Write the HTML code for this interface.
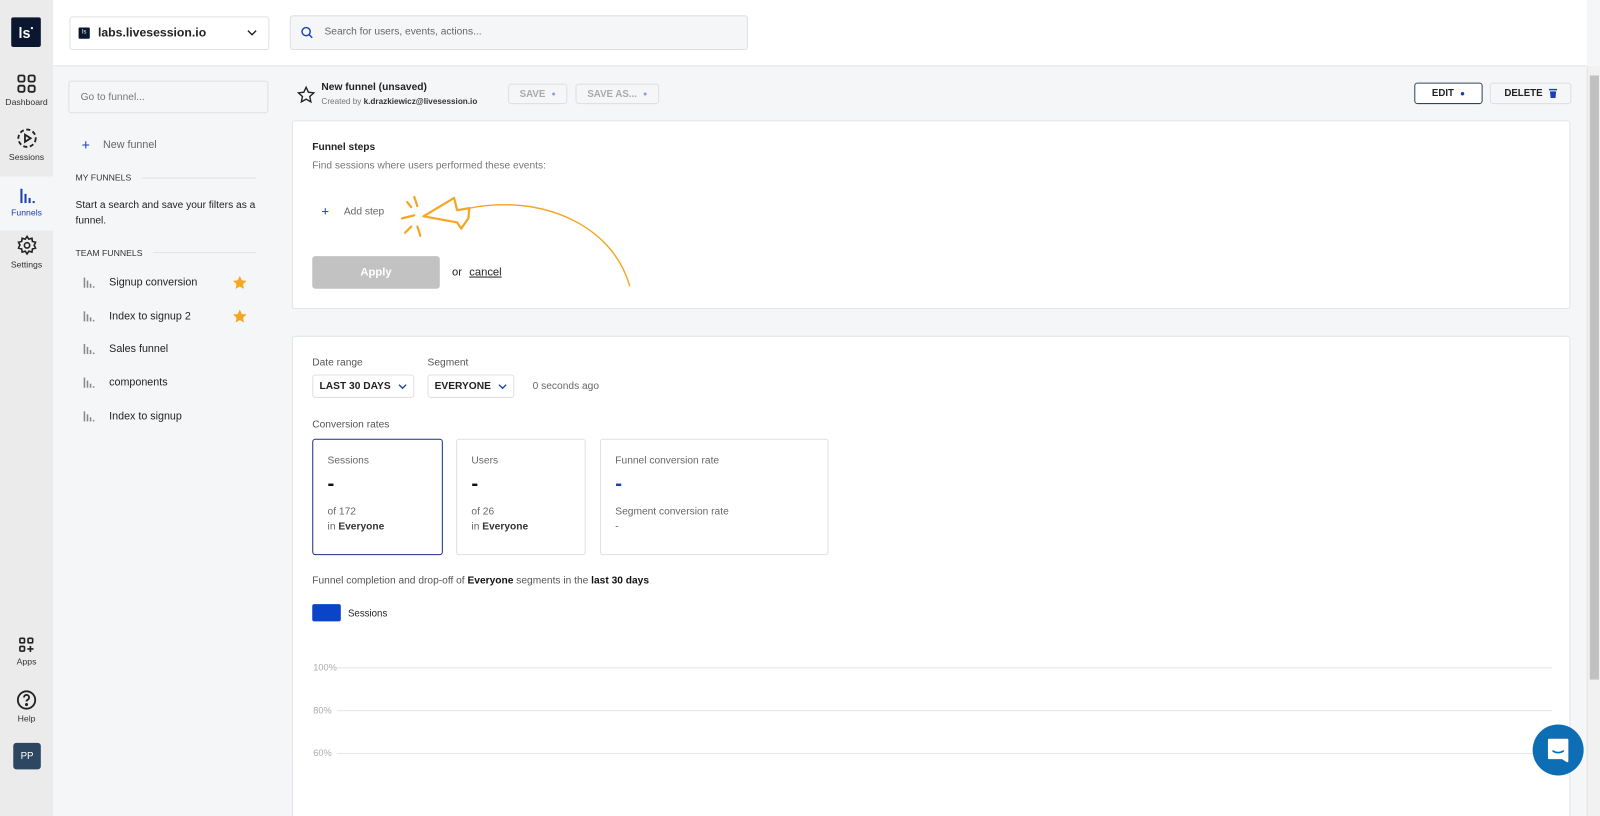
<!DOCTYPE html>
<html><head><meta charset="utf-8"><style>
*{box-sizing:border-box;margin:0;padding:0}
html,body{width:1600px;height:791px;overflow:hidden}
body{font-family:"Liberation Sans",Arial,sans-serif;background:#f5f6f8;color:#222}
#w{position:absolute;left:0;top:0;width:1568px;height:800px;transform:scale(1.0204);transform-origin:0 0;overflow:hidden}
.abs{position:absolute}
.nav{left:0;top:0;width:52px;height:800px;background:#ebebeb}
.ni{position:absolute;left:0;width:52px;text-align:center;font-size:8.5px;color:#333}
.ni svg{display:block;margin:0 auto 3px}
.header{left:52px;top:0;width:1503px;height:65px;background:#fff;border-bottom:1px solid #e3e3e3}
.btn{position:absolute;border:1px solid #dde0e4;border-radius:3px;font-size:9.5px;font-weight:bold;display:flex;align-items:center;justify-content:center;gap:6px;background:#f5f6f8}
.card{position:absolute;background:#fff;border:1px solid #e2e4e8;border-radius:3px}
.t{position:absolute;white-space:nowrap}
.fi{position:absolute;left:80px;font-size:10.5px;color:#222;white-space:nowrap;width:160px;height:14px}
.fi svg{position:absolute;left:0;top:1px}
.fi span{position:absolute;left:27px;top:0;white-space:nowrap}
.sel{position:absolute;border:1px solid #dde0e4;border-radius:3px;font-size:10px;font-weight:bold;display:flex;align-items:center;justify-content:center;gap:7px}
.stat{position:absolute;top:430px;height:114px;border:1px solid #dde0e4;border-radius:3px;font-size:10px;color:#666;padding:15px 14px}
.line{position:absolute;left:330px;width:1191px;height:1px;background:#e5e5e5}
.yl{position:absolute;left:307px;font-size:9px;color:#aaa}
</style></head><body><div id="w">
<div class="abs nav"></div>
<div class="abs" style="left:11px;top:17px;width:29px;height:29px;background:#0b1730;color:#fff;font-size:14px;font-weight:bold;display:flex;align-items:center;justify-content:center;border-radius:2px">ls<span style="font-size:5px;vertical-align:top;margin-top:-8px">●</span></div>
<div class="ni" style="top:72px"><svg width="20" height="20" viewBox="0 0 20 20" fill="none" stroke="#222" stroke-width="1.8"><rect x="2" y="2" width="6" height="6" rx="1.5"/><rect x="12" y="2" width="6" height="6" rx="1.5"/><rect x="2" y="12" width="6" height="6" rx="1.5"/><rect x="12" y="12" width="6" height="6" rx="1.5"/></svg>Dashboard</div>
<div class="ni" style="top:125px"><svg width="21" height="21" viewBox="0 0 21 21" fill="none" stroke="#222" stroke-width="1.8"><circle cx="10.5" cy="10.5" r="8.5" stroke-dasharray="4 2.5"/><path d="M8.5 7v7l5.5-3.5z"/></svg>Sessions</div>
<div class="abs" style="left:0;top:173px;width:52px;height:53px;background:#f5f6f8"></div>
<div class="ni" style="top:184px;color:#1840b0"><svg width="20" height="16" viewBox="0 0 20 16" fill="#1840b0"><rect x="4" y="1" width="2" height="14"/><rect x="8" y="6" width="2" height="9"/><rect x="12" y="10" width="2" height="5"/><rect x="16" y="13" width="2" height="2"/></svg>Funnels</div>
<div class="ni" style="top:230px"><svg width="21" height="21" viewBox="0 0 24 24" fill="none" stroke="#222" stroke-width="1.8"><circle cx="12" cy="12" r="3"/><path d="M12 2l2 3 3.5-1 .5 3.5 3.5 1-1.5 3.5 1.5 3-3.5 1-.5 3.5-3.5-1-2 3-2-3-3.5 1-.5-3.5-3.5-1 1.5-3.5L2.5 8.5 6 7.5 6.5 4 10 5z"/></svg>Settings</div>
<div class="ni" style="top:624px"><svg width="16" height="16" viewBox="0 0 16 16" fill="none" stroke="#222" stroke-width="1.6"><rect x="1.5" y="1.5" width="4.5" height="4.5" rx="1"/><rect x="9.5" y="1.5" width="4.5" height="4.5" rx="1"/><rect x="1.5" y="9.5" width="4.5" height="4.5" rx="1"/><path d="M11.8 9v6M8.8 12h6"/></svg>Apps</div>
<div class="ni" style="top:676px"><svg width="20" height="20" viewBox="0 0 20 20" fill="none" stroke="#222" stroke-width="1.8"><circle cx="10" cy="10" r="8.5"/><path d="M7.5 7.5a2.5 2.5 0 1 1 3.5 2.3c-.7.4-1 .9-1 1.7"/><circle cx="10" cy="14.5" r=".6" fill="#222"/></svg>Help</div>
<div class="abs" style="left:13px;top:728px;width:27px;height:26px;background:#2d4763;border-radius:3px;color:#fff;font-size:9.5px;display:flex;align-items:center;justify-content:center">PP</div>

<div class="abs header"></div>
<div class="abs" style="left:68px;top:16px;width:196px;height:33px;border:1px solid #dde0e4;border-radius:3px;background:#fff"></div>
<div class="abs" style="left:77px;top:27px;width:11px;height:11px;background:#0b1730;border-radius:1px;color:#fff;font-size:6px;text-align:center;line-height:11px">ls</div>
<div class="t" style="left:96px;top:25px;font-size:12px;font-weight:bold">labs.livesession.io</div>
<svg class="abs" style="left:242px;top:29px" width="10" height="6" viewBox="0 0 10 6" fill="none" stroke="#222" stroke-width="1.4"><path d="M1 1l4 4 4-4"/></svg>
<div class="abs" style="left:284px;top:15px;width:449px;height:34px;border:1px solid #dde0e4;border-radius:3px;background:#f5f6f8"></div>
<svg class="abs" style="left:295px;top:26px" width="12" height="12" viewBox="0 0 12 12" fill="none" stroke="#1840b0" stroke-width="1.4"><circle cx="5" cy="5" r="4"/><path d="M8 8l3 3"/></svg>
<div class="t" style="left:318px;top:26px;font-size:10px;color:#666">Search for users, events, actions...</div>

<div class="abs" style="left:67px;top:79px;width:196px;height:32px;border:1px solid #dde0e4;border-radius:3px;background:#f5f6f8"></div>
<div class="t" style="left:79px;top:90px;font-size:10px;color:#777">Go to funnel...</div>
<div class="t" style="left:80px;top:134px;font-size:14px;color:#1840b0">+</div>
<div class="t" style="left:101px;top:136px;font-size:10.5px;color:#666">New funnel</div>
<div class="t" style="left:74px;top:169px;font-size:8.5px;color:#333">MY FUNNELS</div>
<div class="abs" style="left:139px;top:174px;width:112px;height:1px;background:#e3e3e3"></div>
<div class="t" style="left:74px;top:194px;font-size:10px;line-height:15px;color:#222;white-space:normal;width:180px">Start a search and save your filters as a funnel.</div>
<div class="t" style="left:74px;top:243px;font-size:8.5px;color:#333">TEAM FUNNELS</div>
<div class="abs" style="left:150px;top:247px;width:101px;height:1px;background:#e3e3e3"></div>
<div class="fi" style="top:271px"><svg width="14" height="11" viewBox="0 0 14 11" fill="#888"><rect x="2" y="0" width="1.5" height="10"/><rect x="5" y="3" width="1.5" height="7"/><rect x="8" y="6" width="1.5" height="4"/><rect x="11" y="8.5" width="1.5" height="1.5"/></svg><span>Signup conversion</span></div>
<div class="fi" style="top:304px"><svg width="14" height="11" viewBox="0 0 14 11" fill="#888"><rect x="2" y="0" width="1.5" height="10"/><rect x="5" y="3" width="1.5" height="7"/><rect x="8" y="6" width="1.5" height="4"/><rect x="11" y="8.5" width="1.5" height="1.5"/></svg><span>Index to signup 2</span></div>
<div class="fi" style="top:336px"><svg width="14" height="11" viewBox="0 0 14 11" fill="#888"><rect x="2" y="0" width="1.5" height="10"/><rect x="5" y="3" width="1.5" height="7"/><rect x="8" y="6" width="1.5" height="4"/><rect x="11" y="8.5" width="1.5" height="1.5"/></svg><span>Sales funnel</span></div>
<div class="fi" style="top:369px"><svg width="14" height="11" viewBox="0 0 14 11" fill="#888"><rect x="2" y="0" width="1.5" height="10"/><rect x="5" y="3" width="1.5" height="7"/><rect x="8" y="6" width="1.5" height="4"/><rect x="11" y="8.5" width="1.5" height="1.5"/></svg><span>components</span></div>
<div class="fi" style="top:402px"><svg width="14" height="11" viewBox="0 0 14 11" fill="#888"><rect x="2" y="0" width="1.5" height="10"/><rect x="5" y="3" width="1.5" height="7"/><rect x="8" y="6" width="1.5" height="4"/><rect x="11" y="8.5" width="1.5" height="1.5"/></svg><span>Index to signup</span></div>
<svg class="abs" style="left:227px;top:269px" width="16" height="16" viewBox="0 0 24 24" fill="#f5a623"><path d="M12 2l3 6.5 7 .8-5.2 4.8 1.4 7L12 17.6 5.8 21.1l1.4-7L2 9.3l7-.8z"/></svg>
<svg class="abs" style="left:227px;top:302px" width="16" height="16" viewBox="0 0 24 24" fill="#f5a623"><path d="M12 2l3 6.5 7 .8-5.2 4.8 1.4 7L12 17.6 5.8 21.1l1.4-7L2 9.3l7-.8z"/></svg>

<svg class="abs" style="left:291px;top:84px" width="18" height="18" viewBox="0 0 24 24" fill="none" stroke="#222" stroke-width="1.8"><path d="M12 2l3 6.5 7 .8-5.2 4.8 1.4 7L12 17.6 5.8 21.1l1.4-7L2 9.3l7-.8z"/></svg>
<div class="t" style="left:315px;top:80px;font-size:10px;font-weight:bold">New funnel (unsaved)</div>
<div class="t" style="left:315px;top:95px;font-size:8px;color:#777">Created by <b style="color:#333">k.drazkiewicz@livesession.io</b></div>
<div class="btn" style="left:498px;top:82px;width:58px;height:20px;color:#aaa">SAVE <span style="color:#8aa3dd;font-size:7px">●</span></div>
<div class="btn" style="left:564px;top:82px;width:82px;height:20px;color:#aaa">SAVE AS... <span style="color:#8aa3dd;font-size:7px">●</span></div>
<div class="btn" style="left:1386px;top:81px;width:67px;height:21px;border-color:#2d4763;color:#222;background:#fff">EDIT <span style="color:#1840b0;font-size:8px">●</span></div>
<div class="btn" style="left:1460px;top:81px;width:80px;height:21px;color:#222">DELETE <svg width="8" height="9" viewBox="0 0 8 9" fill="#1840b0"><rect x="0" y="0" width="8" height="1.5"/><path d="M1 2.5h6l-.6 6.5H1.6z"/></svg></div>

<div class="card" style="left:286px;top:118px;width:1253px;height:185px"></div>
<div class="t" style="left:306px;top:139px;font-size:10px;font-weight:bold">Funnel steps</div>
<div class="t" style="left:306px;top:157px;font-size:10px;color:#777">Find sessions where users performed these events:</div>
<div class="t" style="left:315px;top:199px;font-size:13px;color:#1840b0">+</div>
<div class="t" style="left:337px;top:202px;font-size:10px;color:#666">Add step</div>
<svg class="abs" style="left:380px;top:185px" width="260" height="105" viewBox="380 185 260 105" fill="none" stroke="#f5a623" stroke-width="2.2" stroke-linecap="round" stroke-linejoin="round">
<path d="M406 193l3 9M394 214l12-3M397 228l6-6M409 222l3 9M399 198l4 5"/>
<path d="M415 212L445 194l3 12 12-2-1 10-7 10-4-6z"/>
<path d="M460 204C530 190 600 220 617 280" stroke-width="1.4"/></svg>
<div class="abs" style="left:306px;top:251px;width:125px;height:32px;background:#c2c2c2;border-radius:3px;color:#fff;font-size:11px;font-weight:bold;text-align:center;line-height:32px">Apply</div>
<div class="t" style="left:443px;top:261px;font-size:11px">or <span style="margin-left:4px;text-decoration:underline">cancel</span></div>

<div class="card" style="left:286px;top:329px;width:1253px;height:480px"></div>
<div class="t" style="left:306px;top:350px;font-size:10px;color:#555">Date range</div>
<div class="t" style="left:419px;top:350px;font-size:10px;color:#555">Segment</div>
<div class="sel" style="left:306px;top:367px;width:100px;height:23px">LAST 30 DAYS <svg width="9" height="6" viewBox="0 0 9 6" fill="none" stroke="#1840b0" stroke-width="1.3"><path d="M1 1l3.5 3.5L8 1"/></svg></div>
<div class="sel" style="left:419px;top:367px;width:85px;height:23px">EVERYONE <svg width="9" height="6" viewBox="0 0 9 6" fill="none" stroke="#1840b0" stroke-width="1.3"><path d="M1 1l3.5 3.5L8 1"/></svg></div>
<div class="t" style="left:522px;top:373px;font-size:10px;color:#666">0 seconds ago</div>
<div class="t" style="left:306px;top:411px;font-size:10px;color:#555">Conversion rates</div>
<div class="stat" style="left:306px;width:128px;border:1.5px solid #1a2f8a">Sessions<div style="font-size:20px;color:#111;font-weight:bold;margin-top:6px">-</div><div style="margin-top:8px;line-height:15px">of 172<br>in <b style="color:#333">Everyone</b></div></div>
<div class="stat" style="left:447px;width:127px">Users<div style="font-size:20px;color:#111;font-weight:bold;margin-top:6px">-</div><div style="margin-top:8px;line-height:15px">of 26<br>in <b style="color:#333">Everyone</b></div></div>
<div class="stat" style="left:588px;width:224px">Funnel conversion rate<div style="font-size:20px;color:#1840b0;font-weight:bold;margin-top:6px">-</div><div style="margin-top:8px;line-height:15px">Segment conversion rate<br>-</div></div>
<div class="t" style="left:306px;top:564px;font-size:10px;color:#555">Funnel completion and drop-off of <b style="color:#111">Everyone</b> segments in the <b style="color:#111">last 30 days</b></div>
<div class="abs" style="left:306px;top:592px;width:28px;height:17px;background:#0b44c8;border-radius:2px"></div>
<div class="t" style="left:341px;top:596px;font-size:9.5px;color:#222">Sessions</div>
<div class="line" style="top:654px"></div><div class="yl" style="top:649px">100%</div>
<div class="line" style="top:696px"></div><div class="yl" style="top:691px">80%</div>
<div class="line" style="top:738px"></div><div class="yl" style="top:733px">60%</div>

<div class="abs" style="left:1555px;top:65px;width:13px;height:740px;background:#f1f1f1;border-left:1px solid #e3e3e3"></div>
<div class="abs" style="left:1558px;top:74px;width:9px;height:592px;background:#c1c1c1"></div>
<div class="abs" style="left:1502px;top:710px;width:50px;height:50px;border-radius:50%;background:#0e6eb4"></div>
<svg class="abs" style="left:1515px;top:722px" width="24" height="26" viewBox="0 0 24 26"><path d="M3 3h18v21l-5-3H3z" fill="#fff" stroke="#fff" stroke-linejoin="round" stroke-width="2"/><path d="M7 14c3 2 7 2 10 0" fill="none" stroke="#0e6eb4" stroke-width="1.6" stroke-linecap="round"/></svg>
</div></body></html>
